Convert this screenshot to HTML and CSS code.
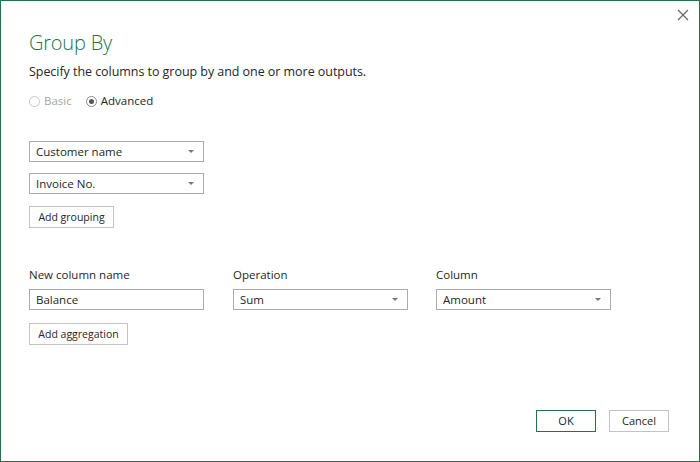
FILE: index.html
```html
<!DOCTYPE html>
<html>
<head>
<meta charset="utf-8">
<link rel="stylesheet" href="styles.css">
</head>
<body>
<div class="dialog">
  <button class="close" aria-label="Close">
    <svg width="12" height="12" viewBox="0 0 12 12"><path d="M1 1L11 11M11 1L1 11" stroke="#666" stroke-width="1.2" fill="none"/></svg>
  </button>
  <h1 class="title">Group By</h1>
  <p class="subtitle">Specify the columns to group by and one or more outputs.</p>
  <div class="radios">
    <label class="radio disabled"><span class="dot"></span>Basic</label>
    <label class="radio"><span class="dot checked"></span>Advanced</label>
  </div>
  <div class="groupings">
    <div class="select wide"><span>Customer name</span><span class="arrow"></span></div>
    <div class="select wide"><span>Invoice No.</span><span class="arrow"></span></div>
    <button class="btn add-grouping">Add grouping</button>
  </div>
  <div class="agg">
    <div class="agg-col">
      <div class="label">New column name</div>
      <div class="input wide">Balance</div>
    </div>
    <div class="agg-col">
      <div class="label">Operation</div>
      <div class="select wide"><span>Sum</span><span class="arrow"></span></div>
    </div>
    <div class="agg-col">
      <div class="label">Column</div>
      <div class="select wide"><span>Amount</span><span class="arrow"></span></div>
    </div>
  </div>
  <button class="btn add-agg">Add aggregation</button>
  <div class="footer">
    <button class="btn ok">OK</button>
    <button class="btn cancel">Cancel</button>
  </div>
</div>
</body>
</html>
```
FILE: styles.css
```css
* { box-sizing: border-box; }
html, body { margin: 0; padding: 0; background: #fff; }
body { font-family: "Open Sans", "Noto Sans", sans-serif; color: #262626; }
.dialog {
  position: relative;
  width: 700px;
  height: 462px;
  border: 1px solid #217346;
  padding: 0 0 0 28px;
  display: flex;
  flex-direction: column;
  align-items: flex-start;
}
.close {
  position: absolute;
  top: 6px;
  right: 8px;
  width: 16px;
  height: 16px;
  padding: 2px;
  border: 0;
  background: none;
  display: flex;
}
.title {
  margin: 29px 0 0;
  font-size: 20px;
  font-weight: 300;
  line-height: 26px;
  color: #217346;
  letter-spacing: -0.2px;
}
.subtitle {
  margin: 7px 0 0;
  font-size: 12.5px;
  line-height: 18px;
  color: #262626;
  letter-spacing: -0.05px;
}
.radios {
  display: flex;
  gap: 14px;
  margin-top: 12px;
  font-size: 11.5px;
  line-height: 16px;
}
.radio { display: flex; align-items: center; gap: 4px; color: #262626; }
.radio.disabled { color: #a6a6a6; }
.dot {
  width: 11px;
  height: 11px;
  border-radius: 50%;
  border: 1px solid #c8c8c8;
  display: inline-flex;
  align-items: center;
  justify-content: center;
}
.dot.checked { border-color: #8a8a8a; }
.dot.checked::after {
  content: "";
  width: 5px;
  height: 5px;
  border-radius: 50%;
  background: #555;
}
.groupings {
  display: flex;
  flex-direction: column;
  align-items: flex-start;
  gap: 11px;
  margin-top: 32px;
}
.select, .input {
  height: 21px;
  border: 1px solid #ababab;
  display: flex;
  align-items: center;
  justify-content: space-between;
  padding: 0 9px 0 6px;
  font-size: 11.5px;
  color: #262626;
  background: #fff;
}
.wide { width: 175px; }
.arrow {
  width: 0;
  height: 0;
  border-left: 3px solid transparent;
  border-right: 3px solid transparent;
  border-top: 3px solid #777;
}
.btn {
  font-family: inherit;
  font-size: 10.5px;
  color: #262626;
  background: #fff;
  border: 1px solid #c3c3c3;
  height: 22px;
  padding: 0;
  line-height: 18px;
  white-space: nowrap;
}
.add-grouping { margin-top: 1px; width: 85px; }
.agg {
  display: flex;
  gap: 29px;
  margin-top: 39px;
}
.agg-col { display: flex; flex-direction: column; gap: 6px; }
.agg-col + .agg-col + .agg-col { margin-left: -1px; }
.label { font-size: 11.5px; line-height: 16px; color: #262626; }
.input { justify-content: flex-start; }
.add-agg { margin-top: 13px; width: 99px; }
.footer {
  margin-top: auto;
  margin-bottom: 29px;
  align-self: flex-end;
  margin-right: 30px;
  display: flex;
  gap: 13px;
}
.ok, .cancel { width: 60px; height: 22px; padding: 0; font-size: 11px; }
.ok { border-color: #217346; }
```
